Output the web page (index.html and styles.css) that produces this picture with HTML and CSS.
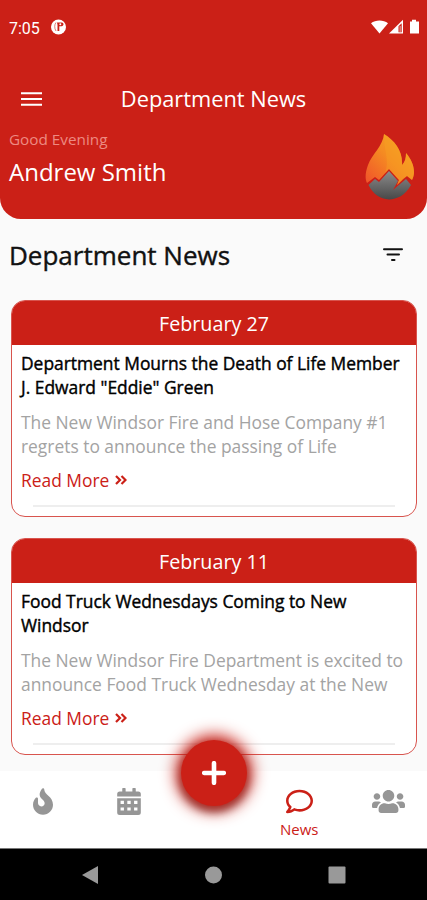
FILE: index.html
```html
<!DOCTYPE html>
<html lang="en">
<head>
    <meta charset="UTF-8">
    <meta name="viewport" content="width=device-width, initial-scale=1.0">
    <title>Department News</title>
    <link rel="stylesheet" href="styles.css">
</head>
<body>
    <div class="screen">
        <header class="header">
            <div class="status-bar">
                <span class="time">7:05</span>
                <svg class="app-icon" width="15" height="16" viewBox="0 0 15 16">
                    <circle cx="7.5" cy="8" r="7.5" fill="#fff"/>
                    <path d="M5 3.500C3.400 5 3.200 9.500 5 12" fill="none" stroke="#cb2017" stroke-width=".6"/>
                    <path d="M6 3.500h4.600c1.400 0 1.900.9 1.900 1.800s-.7 1.900-1.900 1.900H8.300V12H6.500V6z" fill="#cb2017"/>
                    <circle cx="9.300" cy="5.300" r="1" fill="#fff"/>
                </svg>
                <svg class="status-icons" width="50" height="16" viewBox="0 0 50 16">
                    <path d="M0 4.200C4.500.5 12.500.5 17 4.200L8.500 14.500z" fill="#fff"/>
                    <path d="M18 14.500 32 .8v13.700z" fill="#fff"/>
                    <path d="M27.500 7.200 30.700 4.200v9h-3.200z" fill="#cb2017"/>
                    <path d="M28.500 7h1.300v6h-1.300z" fill="#fff" opacity=".5"/>
                    <path d="M41 .8h4v1.700h3v12h-9v-12h2z" fill="#fff"/>
                </svg>
            </div>
            <div class="nav-bar">
                <svg class="menu-icon" width="21" height="14" viewBox="0 0 21 14">
                    <path d="M0 1.200h21M0 7h21M0 12.800h21" stroke="#fff" stroke-width="2"/>
                </svg>
                <span class="nav-title">Department News</span>
            </div>
            <div class="profile">
                <div>
                    <p class="greeting">Good Evening</p>
                    <p class="user-name">Andrew Smith</p>
                </div>
                <svg class="logo" width="50" height="67" viewBox="0 0 50 67">
                    <defs>
                        <linearGradient id="flame" x1="1" y1="0" x2="0" y2="1">
                            <stop offset="0" stop-color="#f7ae22"/>
                            <stop offset=".5" stop-color="#f58b22"/>
                            <stop offset="1" stop-color="#f0502b"/>
                        </linearGradient>
                        <linearGradient id="rock" x1="0" y1="0" x2="0" y2="1">
                            <stop offset="0" stop-color="#8c8c8c"/>
                            <stop offset="1" stop-color="#484848"/>
                        </linearGradient>
                    </defs>
                    <path d="M19 0C18 12 7 20 3 31 0 39 0 45 2 49l8-6 4 3 10-11 10 11-2 5 6-6 4-3 5 4c4-7 2-18-6-27 0 5-1 9-4 12C38 17 30 7 19 0z" fill="url(#flame)"/>
                    <path d="M19 0c-1 14 6 26 1 39l4-4 10 11-2 5 10-9 5 4c4-7 2-18-6-27 0 5-1 9-4 12C38 17 30 7 19 0z" fill="#f7a322" opacity=".4"/>
                    <path d="M3.500 51l6.500-6 4 3 10-11 9 10-5 9 13-11 5 6C40 62 32 65 24 65.500 15 65 8 60 3.500 51z" fill="url(#rock)"/>
                </svg>
            </div>
        </header>

        <main class="content">
            <div class="heading">
                <h1>Department News</h1>
                <svg width="20" height="14" viewBox="0 0 20 14">
                    <path d="M1 1.200h18M4.500 6.600h11.500M9 12h2.500" stroke="#111" stroke-width="2" stroke-linecap="round"/>
                </svg>
            </div>

            <article class="card">
                <div class="card-date">February 27</div>
                <div class="card-body">
                    <h2>Department Mourns the Death of Life Member<br>J. Edward "Eddie" Green</h2>
                    <p class="excerpt">The New Windsor Fire and Hose Company #1<br>regrets to announce the passing of Life</p>
                    <a class="read-more">Read More
                        <svg width="12" height="10" viewBox="0 0 12 10">
                            <path d="M1 1l4 4-4 4M6.500 1l4 4-4 4" fill="none" stroke="#cb2017" stroke-width="2.200"/>
                        </svg>
                    </a>
                </div>
                <div class="divider"></div>
            </article>

            <article class="card">
                <div class="card-date">February 11</div>
                <div class="card-body">
                    <h2>Food Truck Wednesdays Coming to New<br>Windsor</h2>
                    <p class="excerpt">The New Windsor Fire Department is excited to<br>announce Food Truck Wednesday at the New</p>
                    <a class="read-more">Read More
                        <svg width="12" height="10" viewBox="0 0 12 10">
                            <path d="M1 1l4 4-4 4M6.500 1l4 4-4 4" fill="none" stroke="#cb2017" stroke-width="2.200"/>
                        </svg>
                    </a>
                </div>
                <div class="divider"></div>
            </article>
        </main>

        <nav class="tab-bar">
            <div class="tab">
                <svg width="20" height="27" viewBox="0 0 384 512">
                    <path fill="#969696" d="M216 23.900c0-23.800-30.700-33-44.200-13.500C48 191.900 224 200 224 288c0 35.600-29.100 64.500-64.800 64-35.100-.5-63.200-29.800-63.200-64.900v-85.500c0-21.700-26.500-32.200-41.400-16.500C27.800 213.200 0 261.300 0 320c0 105.900 86.100 192 192 192s192-86.100 192-192c0-170.300-168-193-168-296.100z"/>
                </svg>
            </div>
            <div class="tab">
                <svg width="24" height="27" viewBox="0 0 448 512">
                    <path fill="#969696" fill-rule="evenodd" d="M0 192h448v272a48 48 0 0 1-48 48H48a48 48 0 0 1-48-48zM64 244v60h64v-60zM192 244v60h64v-60zM320 244v60h64v-60zM64 368v60h64v-60zM192 368v60h64v-60zM320 368v60h64v-60zM0 160v-48a48 48 0 0 1 48-48h48V12a12 12 0 0 1 12-12h40a12 12 0 0 1 12 12v52h128V12a12 12 0 0 1 12-12h40a12 12 0 0 1 12 12v52h48a48 48 0 0 1 48 48v48z"/>
                </svg>
            </div>
            <div class="tab tab-add">
                <button class="add-button" aria-label="Add">
                    <svg width="24" height="24" viewBox="0 0 24 24">
                        <path d="M12 2.200v19.600M2.200 12h19.600" stroke="#fff" stroke-width="4.600" stroke-linecap="round"/>
                    </svg>
                </button>
            </div>
            <div class="tab active">
                <svg width="27" height="27" viewBox="0 0 512 512">
                    <path fill="#cb2017" d="M256 32C114.600 32 0 125.100 0 240c0 47.600 19.900 91.200 52.900 126.300C38 405.700 7 439.100 6.500 439.500c-6.600 7-8.400 17.200-4.600 26S14.400 480 24 480c61.500 0 110-25.700 139.100-46.300C192 442.800 223.200 448 256 448c141.400 0 256-93.100 256-208S397.400 32 256 32zm0 368c-26.700 0-53.100-4.100-78.400-12.100l-22.700-7.200-19.500 13.800c-14.300 10.100-33.900 21.400-57.500 29 7.300-12.100 14.400-25.700 19.900-40.200l10.600-28.100-20.600-21.800C69.700 314.100 48 282.200 48 240c0-88.200 93.300-160 208-160s208 71.800 208 160-93.300 160-208 160z"/>
                </svg>
                <span>News</span>
            </div>
            <div class="tab">
                <svg width="33" height="27" viewBox="0 0 640 512">
                    <path fill="#969696" d="M96 224c35.300 0 64-28.700 64-64s-28.700-64-64-64-64 28.700-64 64 28.700 64 64 64zm448 0c35.300 0 64-28.700 64-64s-28.700-64-64-64-64 28.700-64 64 28.700 64 64 64zm32 32h-64c-17.600 0-33.500 7.100-45.100 18.600 40.300 22.100 68.900 62 75.100 109.400h66c17.700 0 32-14.300 32-32v-32c0-35.300-28.700-64-64-64zm-256 0c61.900 0 112-50.100 112-112S381.900 32 320 32 208 82.100 208 144s50.100 112 112 112zm76.800 32h-8.300c-20.800 10-43.900 16-68.500 16s-47.600-6-68.500-16h-8.300C179.600 288 128 339.600 128 403.200V432c0 26.500 21.500 48 48 48h288c26.500 0 48-21.500 48-48v-28.800c0-63.600-51.600-115.200-115.200-115.200zm-223.700-13.400C161.500 263.100 145.600 256 128 256H64c-35.300 0-64 28.700-64 64v32c0 17.700 14.300 32 32 32h65.900c6.300-47.400 34.900-87.300 75.200-109.400z"/>
                </svg>
            </div>
        </nav>

        <footer class="system-nav">
            <svg width="17" height="20" viewBox="0 0 17 20"><path d="M17 1v18L1 10z" fill="#999"/></svg>
            <svg width="18" height="18" viewBox="0 0 18 18"><circle cx="9.500" cy="9" r="8.500" fill="#999"/></svg>
            <svg width="18" height="18" viewBox="0 0 18 18"><rect x=".5" y=".5" width="17" height="17" rx="1" fill="#999"/></svg>
        </footer>
    </div>
</body>
</html>
```
FILE: styles.css
```css
* {
    box-sizing: border-box;
}

body {
    margin: 0;
    font-family: 'Open Sans', 'Noto Sans', sans-serif;
    background: #fafafa;
}

h1, h2, p {
    margin: 0;
    font-weight: 400;
}

svg {
    display: block;
    flex-shrink: 0;
}

.screen {
    display: flex;
    flex-direction: column;
    width: 427px;
    height: 900px;
    overflow: hidden;
}

.header {
    height: 219px;
    flex-shrink: 0;
    background: #cb2017;
    color: #fff;
    border-radius: 0 0 21px 21px;
}

.status-bar {
    display: flex;
    align-items: center;
    height: 54px;
    padding: 0 6px 0 9px;
}

.time {
    width: 42px;
    padding-top: 2px;
    font-family: Roboto, sans-serif;
    font-size: 16px;
}

.status-icons {
    margin-left: auto;
}

.nav-bar {
    display: grid;
    grid-template-columns: 1fr auto 1fr;
    align-items: center;
    height: 89px;
    padding: 0 21px;
    margin-bottom: -17px;
}

.nav-title {
    font-size: 21.8px;
}

.profile {
    display: flex;
    justify-content: space-between;
    padding: 0 12px 0 9px;
}

.greeting {
    padding-top: 2px;
    font-size: 15.3px;
    line-height: 22px;
    color: #ed8a82;
}

.user-name {
    padding-top: 6px;
    font-size: 24px;
    line-height: 32px;
}

.logo {
    margin-top: 8px;
}

.content {
    flex: 1;
    min-height: 0;
    padding: 0 10px 0 11px;
}

.heading {
    display: flex;
    align-items: center;
    justify-content: space-between;
    height: 72px;
    margin-bottom: 9px;
    padding-right: 14px;
}

.heading h1 {
    margin-left: -2px;
    font-size: 26px;
    color: #111;
    -webkit-text-stroke: 0.4px #111;
}

.card {
    height: 217px;
    margin-bottom: 21px;
    background: #fff;
    border: 1px solid #d8544e;
    border-radius: 14px;
    overflow: hidden;
}

.card-date {
    height: 44px;
    background: #cb2017;
    color: #fff;
    font-size: 19.7px;
    line-height: 45px;
    text-align: center;
}

.card-body {
    padding: 6px 0 0 9px;
    white-space: nowrap;
}

.card h2 {
    font-size: 17.4px;
    line-height: 24px;
    color: #000;
    -webkit-text-stroke: 0.4px #000;
}

.excerpt {
    padding-top: 11px;
    font-size: 17.4px;
    line-height: 24px;
    color: #a3a3a3;
}

.read-more {
    display: flex;
    align-items: center;
    gap: 6px;
    padding-top: 10px;
    font-size: 17.4px;
    line-height: 24px;
    color: #cb2017;
}

.divider {
    height: 2px;
    margin: 13px 21px 0;
    background: #eee;
}

.tab-bar {
    display: grid;
    grid-template-columns: repeat(5, 1fr);
    height: 77px;
    padding-left: 1px;
    background: #fff;
    z-index: 1;
}

.tab {
    display: flex;
    flex-direction: column;
    align-items: center;
    padding-top: 17px;
}

.tab:first-child {
    padding-right: 2px;
}

.tab:last-child {
    padding-left: 8px;
}

.tab span {
    font-size: 15px;
    line-height: 20px;
    margin-top: 4px;
    color: #cb2017;
}

.tab-add {
    padding-top: 0;
}

.add-button {
    display: flex;
    align-items: center;
    justify-content: center;
    flex-shrink: 0;
    width: 66px;
    height: 66px;
    margin-top: -31px;
    padding: 0;
    border: none;
    border-radius: 50%;
    background: #cb2017;
    box-shadow: 0 0 16px 5px #cb2017, 0 4px 9px 1px rgba(0, 0, 0, 0.65);
}

.system-nav {
    display: flex;
    align-items: center;
    justify-content: space-between;
    height: 52px;
    flex-shrink: 0;
    padding: 0 81px 0 81px;
    background: #000;
    border-top: 1px solid #777;
}
```
